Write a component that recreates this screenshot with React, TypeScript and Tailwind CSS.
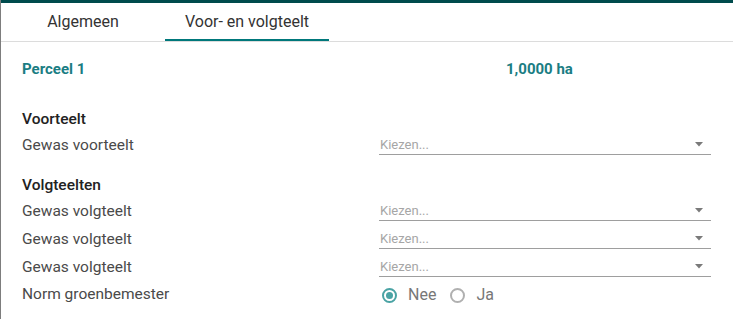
import React from "react";

const font = { fontFamily: "Roboto, 'Liberation Sans', sans-serif" };

function Select() {
  return (
    <div className="mt-[5px] flex h-[19px] w-[332px] items-center justify-between border-b border-[#9e9e9e] pl-px pr-2">
      <span className="text-[13px] text-[#a6a6a6]">Kiezen...</span>
      <svg width="8" height="5" viewBox="0 0 8 5" className="mb-px">
        <path d="M0 0h8L4 4.5z" fill="#7a7a7a" />
      </svg>
    </div>
  );
}

function Row({ label, children }: { label: string; children: React.ReactNode }) {
  return (
    <div className="flex h-[28px] items-start">
      <div className="w-[357px] text-[15.5px] leading-[28px] text-[#4a4a4a]">{label}</div>
      {children}
    </div>
  );
}

function Radio({ checked, label }: { checked?: boolean; label: string }) {
  return (
    <div className="flex items-center gap-[11px]">
      <span
        className={
          checked
            ? "flex h-[15px] w-[15px] items-center justify-center rounded-full border-2 border-[#4aa3a4]"
            : "flex h-[15px] w-[15px] items-center justify-center rounded-full border-2 border-[#b0b0b0]"
        }
      >
        {checked && <span className="h-[7px] w-[7px] rounded-full bg-[#4aa3a4]" />}
      </span>
      <span className="text-[16px] text-[#777]">{label}</span>
    </div>
  );
}

export default function App() {
  return (
    <div style={font} className="h-[319px] w-[733px] overflow-hidden border-l border-[#7d7d7d] bg-white">
      <div className="h-[3px] bg-[#004b4d]" />
      <div className="flex h-[39px] border-b border-[#dcdcdc]">
        <div className="flex w-[164px] items-center justify-center text-[16px] text-[#333]">Algemeen</div>
        <div className="flex w-[164px] items-center justify-center border-b-2 border-[#00787b] pt-[2px] text-[16px] text-[#333]">
          Voor- en volgteelt
        </div>
      </div>
      <div className="pl-[21px]">
        <div className="flex h-[54px] items-center">
          <div className="w-[357px] text-[15px] font-bold text-[#1a7d83]">Perceel 1</div>
          <div className="pl-[127px] text-[15px] font-bold text-[#1a7d83]">1,0000 ha</div>
        </div>
        <div className="mt-[13px] flex h-[22px] items-center text-[15.5px] font-medium text-[#222]">Voorteelt</div>
        <Row label="Gewas voorteelt">
          <Select />
        </Row>
        <div className="mt-[16px] flex h-[22px] items-center text-[15.5px] font-medium text-[#222]">Volgteelten</div>
        <Row label="Gewas volgteelt">
          <Select />
        </Row>
        <Row label="Gewas volgteelt">
          <Select />
        </Row>
        <Row label="Gewas volgteelt">
          <Select />
        </Row>
        <div className="flex h-[28px] items-center">
          <div className="w-[357px] text-[15.5px] text-[#4a4a4a]">Norm groenbemester</div>
          <div className="ml-[3px] flex items-center gap-[14px]">
            <Radio checked label="Nee" />
            <Radio label="Ja" />
          </div>
        </div>
      </div>
    </div>
  );
}
